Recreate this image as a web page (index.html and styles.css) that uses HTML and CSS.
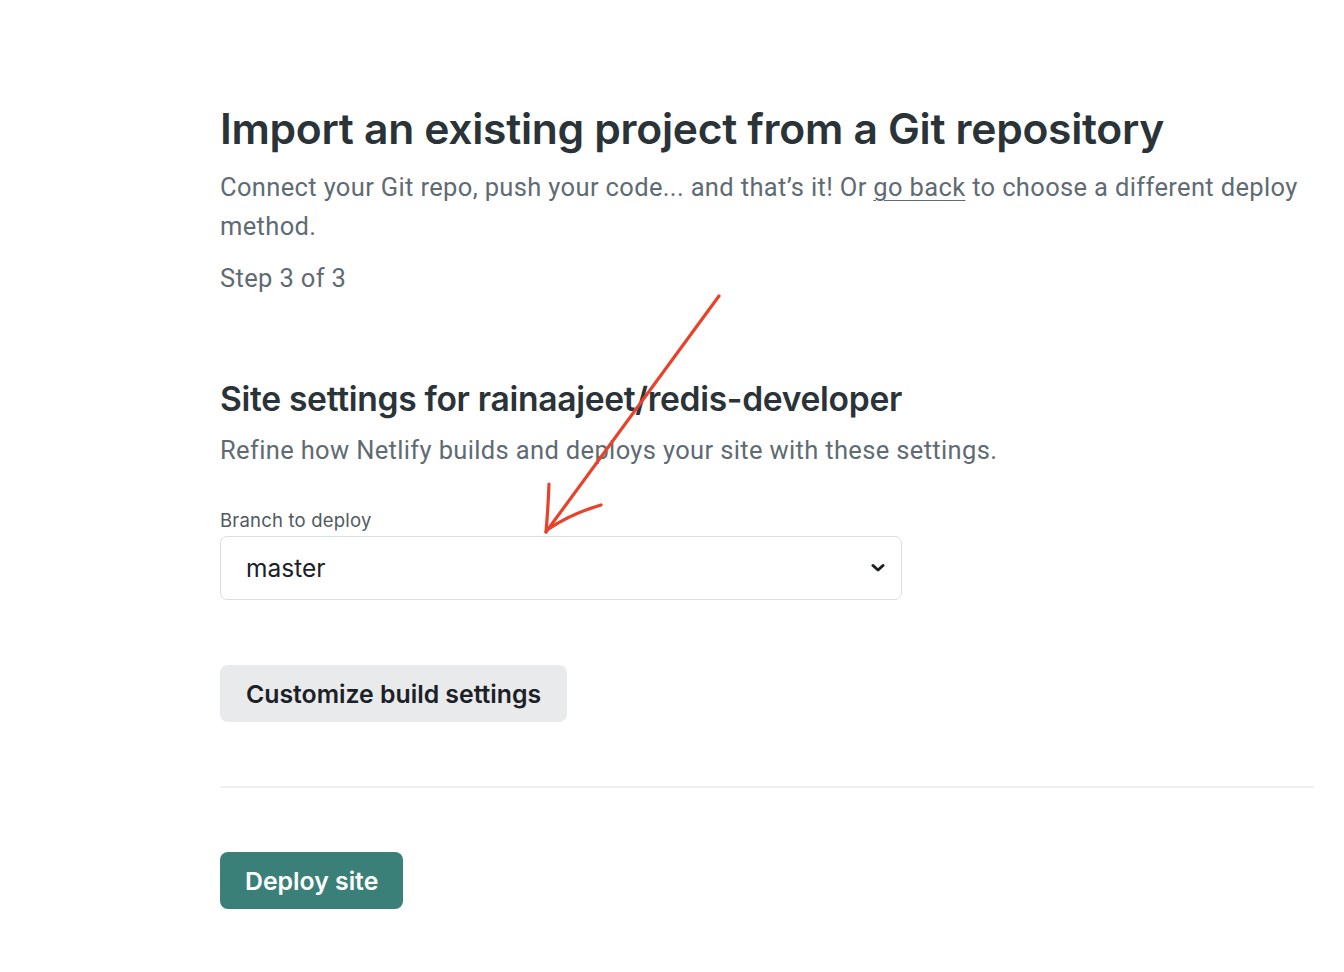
FILE: index.html
```html
<!DOCTYPE html>
<html lang="en">
<head>
<meta charset="utf-8">
<title>Import an existing project</title>
<link rel="stylesheet" href="styles.css">
</head>
<body>
<main class="page">
  <section class="intro">
    <h1 class="title">Import an existing project from a Git repository</h1>
    <p class="lead">Connect your Git repo, push your code... and that’s it! Or <a href="#" class="link">go back</a> to choose a different deploy method.</p>
    <p class="step">Step 3 of 3</p>
  </section>

  <section class="settings">
    <h2 class="subtitle">Site settings for rainaajeet/redis-developer</h2>
    <p class="lead">Refine how Netlify builds and deploys your site with these settings.</p>

    <div class="field">
      <label class="label">Branch to deploy</label>
      <div class="select">
        <span class="select-value">master</span>
        <svg class="chevron" width="14" height="10" viewBox="0 0 14 10"><path d="M2 2.5 L7 7 L12 2.5" fill="none" stroke="#1a1f24" stroke-width="3" stroke-linecap="round" stroke-linejoin="round"/></svg>
      </div>
    </div>

    <button class="btn btn-secondary">Customize build settings</button>
  </section>

  <hr class="divider">

  <button class="btn btn-primary">Deploy site</button>
</main>

<svg class="annotation" width="1344" height="972" viewBox="0 0 1344 972">
  <g fill="none" stroke="#e8432a" stroke-width="3.2" stroke-linecap="round" stroke-linejoin="round">
    <path d="M719 296 L546 532"/>
    <path d="M549 484 Q548 510 546 532"/>
    <path d="M601 505 Q570 514 547 530"/>
  </g>
</svg>
</body>
</html>
```

FILE: styles.css
```css
html, body {
  margin: 0;
  padding: 0;
  background: #ffffff;
}

body {
  font-family: Roboto, "Liberation Sans", Arial, sans-serif;
  color: #5f6b73;
  position: relative;
  min-height: 972px;
  overflow: hidden;
}

.page {
  width: 1094px;
  padding: 101px 0 0 220px;
  display: flex;
  flex-direction: column;
  align-items: flex-start;
}

.title {
  font-family: Inter, "Noto Sans", sans-serif;
  font-weight: 600;
  font-size: 42.6px;
  letter-spacing: -0.3px;
  line-height: 56px;
  color: #2a3338;
  margin: 0 0 11px 0;
}

.subtitle {
  font-family: Inter, "Noto Sans", sans-serif;
  font-weight: 600;
  font-size: 33.6px;
  letter-spacing: -0.3px;
  line-height: 44px;
  color: #2a3338;
  margin: 0 0 10px 0;
}

.lead {
  font-size: 25.5px;
  letter-spacing: 0.35px;
  line-height: 39px;
  margin: 0;
  color: #5f6b73;
}

.link {
  color: #5f6b73;
  text-decoration: underline;
  text-underline-offset: 4px;
  text-decoration-thickness: 1px;
}

.step {
  font-size: 25.5px;
  letter-spacing: 0.35px;
  line-height: 39px;
  margin: 13px 0 0 0;
}

.settings {
  margin-top: 79px;
  display: flex;
  flex-direction: column;
  align-items: flex-start;
}

.field {
  margin-top: 38px;
  display: flex;
  flex-direction: column;
  gap: 4px;
}

.label {
  font-family: Inter, "Noto Sans", sans-serif;
  font-size: 18.5px;
  letter-spacing: 0.2px;
  line-height: 24px;
  color: #4f5a61;
}

.select {
  display: flex;
  align-items: center;
  justify-content: space-between;
  padding: 0 16px 0 25px;
  box-sizing: border-box;
  width: 682px;
  height: 64px;
  border: 1px solid #dcdfe2;
  border-radius: 7px;
}

.select-value {
  font-family: Inter, "Noto Sans", sans-serif;
  font-size: 24.5px;
  color: #1b2126;
}

.chevron {
  display: block;
}

.btn {
  font-family: Inter, "Noto Sans", sans-serif;
  font-weight: 600;
  font-size: 24.8px;
  border: none;
  border-radius: 8px;
  height: 57px;
  padding: 0 26px;
  cursor: pointer;
}

.btn-secondary {
  margin-top: 65px;
  background: #e9eaec;
  color: #1b2126;
}

.divider {
  align-self: stretch;
  border: none;
  border-top: 2px solid #eeeff0;
  margin: 64px 0 0 0;
}

.btn-primary {
  margin-top: 64px;
  background: #3b8078;
  color: #ffffff;
  padding: 0 25px;
}

.annotation {
  position: absolute;
  left: 0;
  top: 0;
  pointer-events: none;
}
```
